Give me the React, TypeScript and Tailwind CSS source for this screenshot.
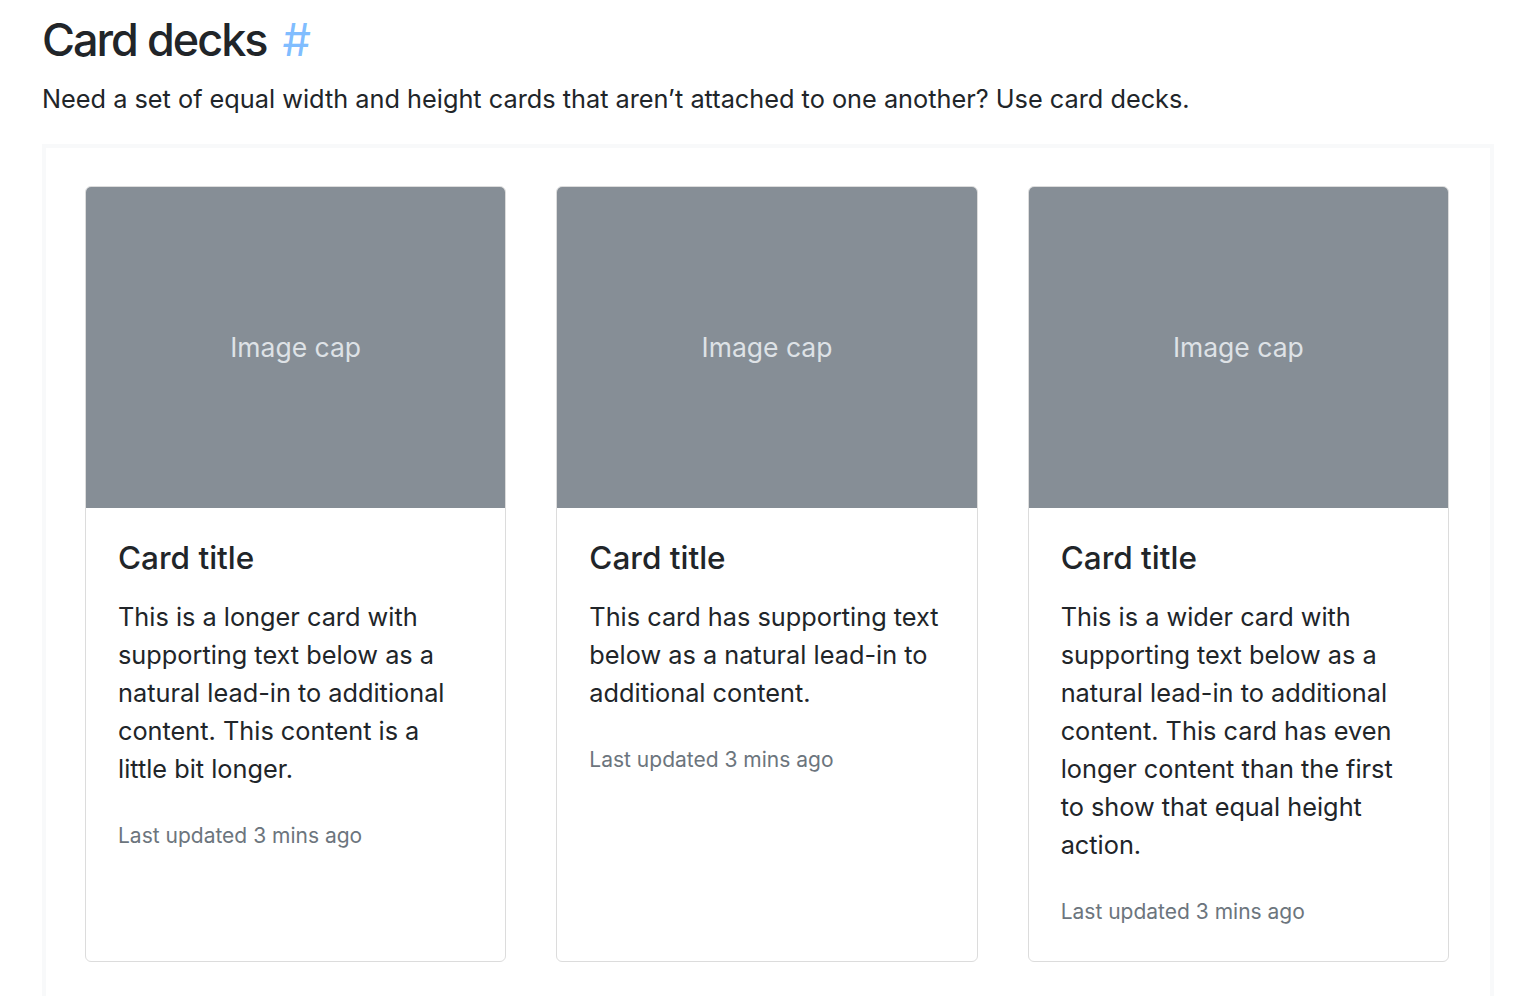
import React from 'react';

const cards = [
  {
    text: 'This is a longer card with supporting text below as a natural lead-in to additional content. This content is a little bit longer.',
  },
  {
    text: 'This card has supporting text below as a natural lead-in to additional content.',
  },
  {
    text: 'This is a wider card with supporting text below as a natural lead-in to additional content. This card has even longer content than the first to show that equal height action.',
  },
];

function Card({ text }: { text: string }) {
  return (
    <div className="flex flex-col rounded-[6px] border-[1.5px] border-[#dcdcdc] bg-white overflow-hidden">
      <div className="h-[321px] bg-[#868e96] flex items-center justify-center">
        <span className="text-[26.5px] text-[#dee2e6]">Image cap</span>
      </div>
      <div className="px-[32px] pt-[31px] pb-[34px]">
        <h5 className="text-[31.5px] leading-[38px] font-medium text-[#212529] mb-[21px]">Card title</h5>
        <p className="text-[25.3px] leading-[38px] text-[#212529] mb-[33px]">{text}</p>
        <p className="text-[21px] leading-[30px] text-[#6c757d]">Last updated 3 mins ago</p>
      </div>
    </div>
  );
}

export default function App() {
  return (
    <div
      className="h-[996px] overflow-hidden bg-white pl-[42px] pr-[26px] pt-[10px]"
      style={{ fontFamily: 'Inter, "Noto Sans", "Liberation Sans", sans-serif' }}
    >
      <h2 className="text-[45px] leading-[60px] font-medium text-[#212529] tracking-[-2px]">
        Card decks <span className="text-[#80bdff] font-normal ml-[6px] tracking-normal">#</span>
      </h2>
      <p className="mt-[10px] text-[25.3px] leading-[38px] text-[#212529]">
        Need a set of equal width and height cards that aren’t attached to one another? Use card decks.
      </p>
      <div className="mt-[26px] border-[4px] border-[#f8f9fa] pl-[39px] pr-[41px] pt-[38px] pb-[38px]">
        <div className="grid grid-cols-3 gap-[50px] items-stretch">
          {cards.map((c, i) => (
            <Card key={i} text={c.text} />
          ))}
        </div>
      </div>
    </div>
  );
}
